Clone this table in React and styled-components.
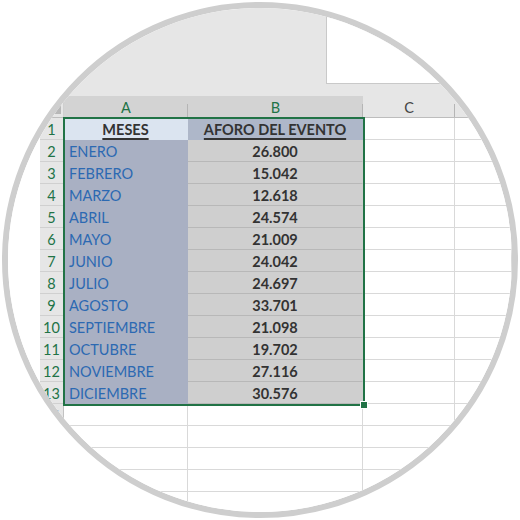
import React from "react";
import styled, { createGlobalStyle } from "styled-components";

const Global = createGlobalStyle`
  html, body { margin: 0; padding: 0; background: #ffffff; }
  body { font-family: Lato, "Liberation Sans", sans-serif; }
  * { box-sizing: border-box; }
`;

const Circle = styled.div`
  width: 516px;
  height: 516px;
  margin: 2px;
  border: 6px solid #cecece;
  border-radius: 50%;
  overflow: hidden;
  background: #ffffff;
  display: flex;
  flex-direction: column;
`;

const TopBand = styled.div`
  height: 88px;
  flex: none;
  background: #e6e6e6;
  display: flex;
  justify-content: flex-end;
  align-items: flex-start;
`;

const NamePanel = styled.div`
  width: 186px;
  height: 76px;
  background: #ffffff;
  border-left: 1px solid #c9c9c9;
  border-bottom: 1px solid #c9c9c9;
`;

const SheetRow = styled.div`
  display: flex;
  flex: 1;
`;

const Gutter = styled.div`
  width: 32px;
  flex: none;
  background: #ffffff;
`;

const Grid = styled.div`
  position: relative;
  flex: 1;
  display: grid;
  grid-template-columns: 24px 124px 175px 92px 1fr;
  grid-auto-rows: 22px;
  align-content: start;
`;

const Corner = styled.div`
  position: relative;
  background: #e6e6e6;
  border-right: 1px solid #cfcfcf;
  border-bottom: 1px solid #bdbdbd;
  &::after {
    content: "";
    position: absolute;
    right: 2px;
    bottom: 3px;
    width: 0;
    height: 0;
    border-left: 10px solid transparent;
    border-bottom: 10px solid #b8b8b8;
  }
`;

const ColHead = styled.div`
  position: relative;
  display: flex;
  align-items: center;
  justify-content: center;
  padding-top: 1px;
  font-size: 14.5px;
  color: ${(p) => (p.$sel ? "#217346" : "#444444")};
  background: ${(p) => (p.$sel ? "#d3d3d3" : "#e6e6e6")};
  border-bottom: 1px solid #bdbdbd;
  &::after {
    content: "";
    position: absolute;
    right: 0;
    bottom: 0;
    width: 1px;
    height: 60%;
    background: #b5b5b5;
  }
`;

const RowHead = styled.div`
  display: flex;
  align-items: center;
  justify-content: center;
  padding-top: 2px;
  font-size: 14.5px;
  color: ${(p) => (p.$sel ? "#217346" : "#444444")};
  background: #e6e6e6;
  border-right: 1px solid #c2c2c2;
  border-bottom: 1px solid #d0d0d0;
`;

const variants = {
  titleA: "background:#dbe4f0;border-color:#dbe4f0;",
  titleB: "background:#aeb7c9;border-color:#aeb7c9;",
  month: "background:#a9b0c3;border-color:#a9b0c3;",
  value: "background:#cfcfcf;border-right-color:#cfcfcf;border-bottom-color:#b8b8b8;",
  empty: "background:#ffffff;border-color:#d9d9d9;",
};

const Cell = styled.div`
  display: flex;
  align-items: center;
  padding: 2px 5px 0;
  font-size: 14.5px;
  line-height: 20px;
  white-space: nowrap;
  border-right: 1px solid #d9d9d9;
  border-bottom: 1px solid #d9d9d9;
  justify-content: ${(p) => (p.$align === "left" ? "flex-start" : "center")};
  font-weight: ${(p) => (p.$bold ? 700 : 400)};
  color: ${(p) => (p.$kind === "month" ? "#2c69b2" : "#333333")};
  ${(p) => variants[p.$kind]}
`;

const Title = styled.span`
  text-decoration: underline;
  text-decoration-thickness: 2px;
  text-underline-offset: 3px;
`;

const Selection = styled.div`
  position: absolute;
  left: 23px;
  top: 21px;
  width: 302px;
  height: 289px;
  border: 2px solid #217346;
  pointer-events: none;
`;

const FillHandle = styled.div`
  position: absolute;
  right: -5px;
  bottom: -5px;
  width: 8px;
  height: 8px;
  background: #217346;
  border: 1px solid #ffffff;
`;

const data = [
  ["ENERO", "26.800"],
  ["FEBRERO", "15.042"],
  ["MARZO", "12.618"],
  ["ABRIL", "24.574"],
  ["MAYO", "21.009"],
  ["JUNIO", "24.042"],
  ["JULIO", "24.697"],
  ["AGOSTO", "33.701"],
  ["SEPTIEMBRE", "21.098"],
  ["OCTUBRE", "19.702"],
  ["NOVIEMBRE", "27.116"],
  ["DICIEMBRE", "30.576"],
];

export default function App() {
  const extra = [14, 15, 16, 17, 18];
  return (
    <>
      <Global />
      <Circle>
        <TopBand>
          <NamePanel />
        </TopBand>
        <SheetRow>
          <Gutter />
          <Grid>
            <Corner />
            <ColHead $sel>A</ColHead>
            <ColHead $sel>B</ColHead>
            <ColHead>C</ColHead>
            <ColHead />

            <RowHead $sel>1</RowHead>
            <Cell $kind="titleA" $bold>
              <Title>MESES</Title>
            </Cell>
            <Cell $kind="titleB" $bold>
              <Title>AFORO DEL EVENTO</Title>
            </Cell>
            <Cell $kind="empty" />
            <Cell $kind="empty" />

            {data.map(([m, v], i) => (
              <React.Fragment key={m}>
                <RowHead $sel>{i + 2}</RowHead>
                <Cell $kind="month" $align="left">{m}</Cell>
                <Cell $kind="value" $bold>{v}</Cell>
                <Cell $kind="empty" />
                <Cell $kind="empty" />
              </React.Fragment>
            ))}

            {extra.map((n) => (
              <React.Fragment key={n}>
                <RowHead>{n}</RowHead>
                <Cell $kind="empty" />
                <Cell $kind="empty" />
                <Cell $kind="empty" />
                <Cell $kind="empty" />
              </React.Fragment>
            ))}

            <Selection>
              <FillHandle />
            </Selection>
          </Grid>
        </SheetRow>
      </Circle>
    </>
  );
}
